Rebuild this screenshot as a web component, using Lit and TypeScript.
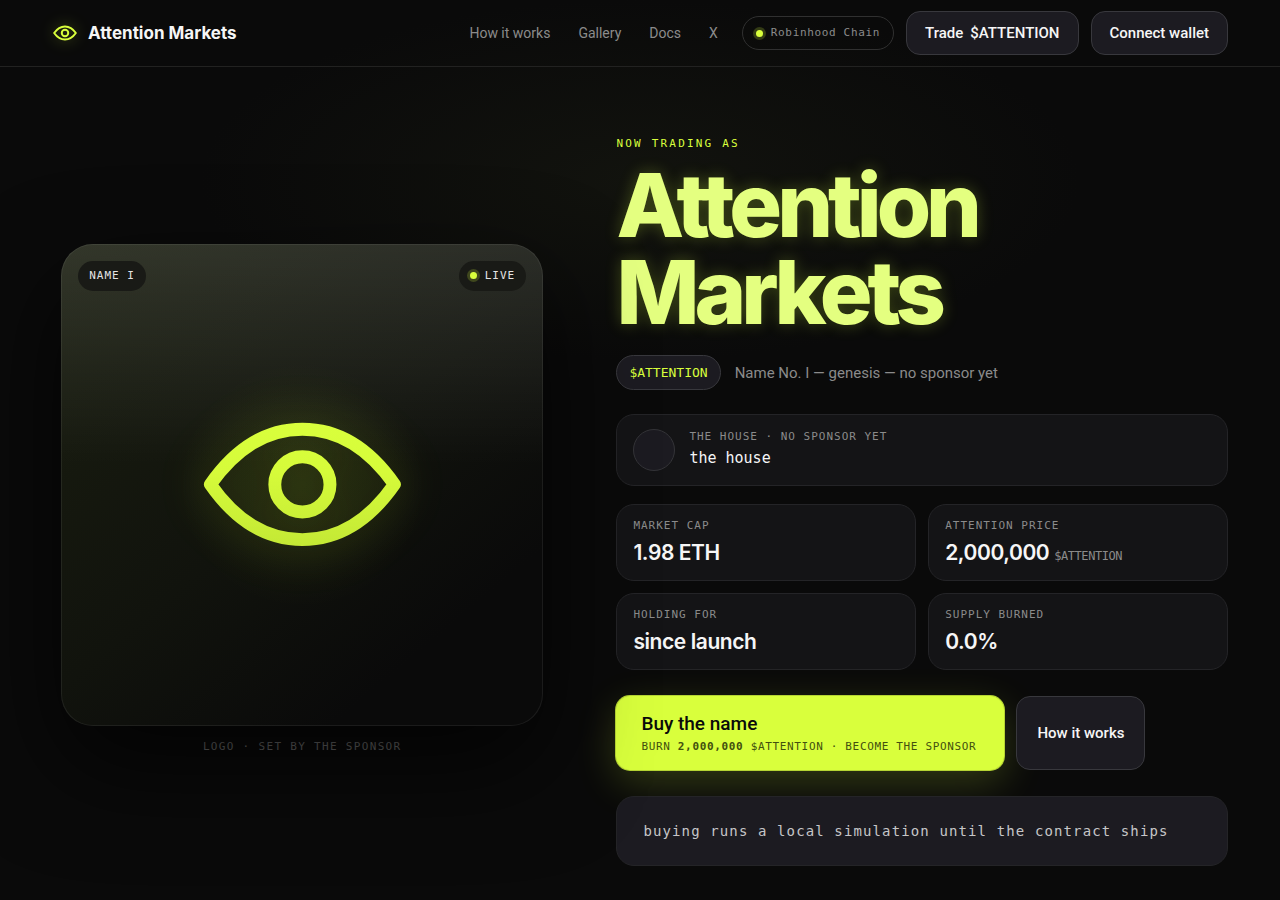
import { LitElement, html, css, svg } from "lit";
import { customElement } from "lit/decorators.js";

const eye = (strokeWidth: number, paint: string) => svg`
  <g fill="none" stroke=${paint} stroke-width=${strokeWidth} stroke-linejoin="round">
    <path d="M2 12C5 7.7 8.4 6 12 6s7 1.7 10 6c-3 4.3-6.4 6-10 6s-7-1.7-10-6Z" />
    <circle cx="12" cy="12" r="3" />
  </g>`;

@customElement("app-root")
export class AppRoot extends LitElement {
  static styles = css`
    :host {
      --lime: #d9ff3c;
      --panel: #141416;
      --raised: #1c1b21;
      --line: #242427;
      --line-strong: #38383d;
      --muted: #8b8b8b;
      --mono: "DejaVu Sans Mono", monospace;
      --sans: Roboto, sans-serif;
      --display: Inter, sans-serif;
      display: block;
      min-height: 100vh;
      background:
        radial-gradient(ellipse 440px 180px at 50% 20%, #12130e, transparent) no-repeat,
        #0a0a0a;
      color: #f6f6f6;
      font: 400 15px/20px var(--sans);
    }
    * { box-sizing: border-box; }
    a { color: inherit; text-decoration: none; }
    button { font: inherit; color: inherit; cursor: pointer; }
    h1, p, dl, dd { margin: 0; }

    .header {
      display: flex;
      align-items: center;
      justify-content: space-between;
      padding: 11px 52px;
      border-bottom: 1px solid #222221;
    }
    .brand {
      display: flex;
      align-items: center;
      gap: 10px;
      font: 700 17px/20px var(--display);
    }
    .brand-eye {
      width: 26px;
      height: 26px;
      filter: drop-shadow(0 0 8px rgba(217, 255, 60, 0.35));
    }
    .actions { display: flex; align-items: center; gap: 12px; }
    .nav {
      display: flex;
      gap: 28px;
      padding-right: 12px;
      color: var(--muted);
      font-size: 14px;
    }
    .chain {
      display: flex;
      align-items: center;
      gap: 8px;
      height: 34px;
      padding: 0 13px;
      border: 1px solid #303030;
      border-radius: 17px;
      color: var(--muted);
      font: 11px/16px var(--mono);
      letter-spacing: 0.06em;
    }
    .dot {
      width: 7px;
      height: 7px;
      border-radius: 50%;
      background: var(--lime);
      box-shadow: 0 0 0 3px rgba(217, 255, 60, 0.2);
    }
    .button {
      background: var(--raised);
      border: 1px solid var(--line-strong);
      border-radius: 14px;
      font-weight: 500;
      height: 44px;
      padding: 0 18px;
      display: flex;
      align-items: center;
      gap: 7px;
    }

    .hero {
      display: grid;
      grid-template-columns: 9fr 11fr;
      gap: 64px;
      align-items: center;
      padding: 70px 52px 30px;
    }
    .showcase {
      display: flex;
      flex-direction: column;
      align-items: center;
      gap: 14px;
      padding-bottom: 6px;
    }
    .card {
      position: relative;
      display: flex;
      align-items: center;
      justify-content: center;
      width: 100%;
      max-width: 482px;
      aspect-ratio: 1;
      border: 1px solid rgba(255, 255, 255, 0.07);
      border-radius: 32px;
      background:
        radial-gradient(circle at 50% 50%, rgba(200, 240, 40, 0.08), transparent 36%),
        linear-gradient(180deg, rgba(255, 255, 255, 0.11), transparent 46%),
        linear-gradient(140deg, #1a1e10, #11130d 50%, #0a0a0a 80%);
      background-origin: border-box;
      box-shadow: 0 40px 100px rgba(0, 0, 0, 0.7);
    }
    .card-eye { width: 46%; filter: drop-shadow(0 0 24px rgba(190, 230, 30, 0.22)); }
    .badges {
      position: absolute;
      inset: 16px 16px auto;
      display: flex;
      justify-content: space-between;
    }
    .badge {
      display: flex;
      align-items: center;
      gap: 8px;
      height: 30px;
      padding: 0 11px;
      border-radius: 15px;
      background: #191a16;
      color: #e4e4e4;
      font: 11px/16px var(--mono);
      letter-spacing: 0.09em;
    }
    .caption { color: #6c6c6c; font: 11px/14px var(--mono); letter-spacing: 0.12em; }

    .details { display: flex; flex-direction: column; min-width: 0; }
    .eyebrow { color: var(--lime); font: 11px/14px var(--mono); letter-spacing: 0.2em; }
    .title {
      margin: 11px 0 19px;
      color: #e4ff80;
      font: 800 88px/87px var(--display);
      letter-spacing: -5px;
      text-shadow: 0 0 16px rgba(217, 255, 60, 0.25);
    }
    .meta { display: flex; align-items: center; gap: 14px; color: var(--muted); }
    .ticker {
      padding: 0 12px;
      border: 1px solid var(--line-strong);
      border-radius: 18px;
      background: var(--raised);
      color: var(--lime);
      font: 13px/33px var(--mono);
    }
    .panel {
      background: var(--panel);
      border: 1px solid var(--line);
      border-radius: 18px;
    }
    .sponsor {
      display: flex;
      align-items: center;
      gap: 14px;
      height: 72px;
      margin: 24px 0 18px;
      padding: 0 16px;
    }
    .avatar {
      width: 42px;
      height: 42px;
      border: 1px solid #343438;
      border-radius: 50%;
      background: var(--raised);
    }
    .label { color: var(--muted); font: 11px/16px var(--mono); letter-spacing: 0.09em; }
    .sponsor-name { font: 15px/26px var(--mono); }
    .stats { display: grid; grid-template-columns: 1fr 1fr; gap: 12px; }
    .stat { padding: 13px 16px 8px; height: 77px; }
    .value { font: 600 21px/38px var(--display); letter-spacing: -0.02em; }
    .unit { color: var(--muted); font: 12px/16px var(--mono); }
    .cta { display: flex; gap: 12px; margin: 26px 0; }
    .buy {
      height: 74px;
      padding: 2px 27px 0 24px;
      border: 1px solid var(--lime);
      border-radius: 14px;
      background: var(--lime);
      color: #0a0a0a;
      text-align: left;
      box-shadow: 0 0 0 1px #b5d433, 0 12px 40px rgba(217, 255, 60, 0.2);
    }
    .buy-title { display: block; font: 500 19px/26px var(--sans); }
    .buy-note {
      display: block;
      color: #43500f;
      font: 11px/20px var(--mono);
      letter-spacing: 0.06em;
    }
    .learn { height: 74px; padding: 0 20px; }
    .notice {
      padding: 24px 26px;
      background: var(--raised);
      color: #c6c6c8;
      font: 14px/20px var(--mono);
      letter-spacing: 0.08em;
    }
    @media (max-width: 1000px) {
      .hero { grid-template-columns: 1fr; }
      .header { flex-wrap: wrap; gap: 16px; }
      .actions { flex-wrap: wrap; }
    }
  `;

  private stats = [
    { label: "MARKET CAP", value: "1.98 ETH" },
    { label: "ATTENTION PRICE", value: "2,000,000", unit: "$ATTENTION" },
    { label: "HOLDING FOR", value: "since launch" },
    { label: "SUPPLY BURNED", value: "0.0%" },
  ];

  render() {
    return html`
      <header class="header">
        <a class="brand" href="#">
          <svg class="brand-eye" viewBox="0 0 24 24" aria-hidden="true">${eye(1.8, "#d9ff3c")}</svg>
          <span>Attention Markets</span>
        </a>
        <div class="actions">
          <nav class="nav">
            <a href="#how">How it works</a>
            <a href="#gallery">Gallery</a>
            <a href="#docs">Docs</a>
            <a href="#x">X</a>
          </nav>
          <span class="chain"><i class="dot"></i>Robinhood Chain</span>
          <a class="button" href="#trade"><span>Trade</span><span>$ATTENTION</span></a>
          <button class="button" type="button">Connect wallet</button>
        </div>
      </header>
      <main class="hero">
        <section class="showcase">
          <div class="card">
            <div class="badges">
              <span class="badge">NAME I</span>
              <span class="badge"><i class="dot"></i>LIVE</span>
            </div>
            <svg class="card-eye" viewBox="0 0 24 24" aria-hidden="true">
              <defs>
                <linearGradient id="lime" gradientUnits="userSpaceOnUse" x1="12" y1="5" x2="12" y2="19">
                  <stop offset="0" stop-color="#d9ff3c" />
                  <stop offset="0.4" stop-color="#d6fb3a" />
                  <stop offset="1" stop-color="#c3e835" />
                </linearGradient>
              </defs>
              ${eye(1.4, "url(#lime)")}
            </svg>
          </div>
          <p class="caption">LOGO · SET BY THE SPONSOR</p>
        </section>
        <section class="details">
          <p class="eyebrow">NOW TRADING AS</p>
          <h1 class="title">Attention<br />Markets</h1>
          <div class="meta">
            <span class="ticker">$ATTENTION</span>
            <span>Name No. I — genesis — no sponsor yet</span>
          </div>
          <div class="panel sponsor">
            <span class="avatar"></span>
            <div>
              <p class="label">THE HOUSE · NO SPONSOR YET</p>
              <p class="sponsor-name">the house</p>
            </div>
          </div>
          <dl class="stats">
            ${this.stats.map(
              (s) => html`<div class="panel stat">
                <dt class="label">${s.label}</dt>
                <dd class="value">${s.value}${s.unit ? html` <span class="unit">${s.unit}</span>` : ""}</dd>
              </div>`
            )}
          </dl>
          <div class="cta">
            <button class="buy" type="button">
              <span class="buy-title">Buy the name</span>
              <span class="buy-note">BURN <b>2,000,000</b> $ATTENTION · BECOME THE SPONSOR</span>
            </button>
            <a class="button learn" href="#how">How it works</a>
          </div>
          <p class="panel notice">buying runs a local simulation until the contract ships</p>
        </section>
      </main>
    `;
  }
}
